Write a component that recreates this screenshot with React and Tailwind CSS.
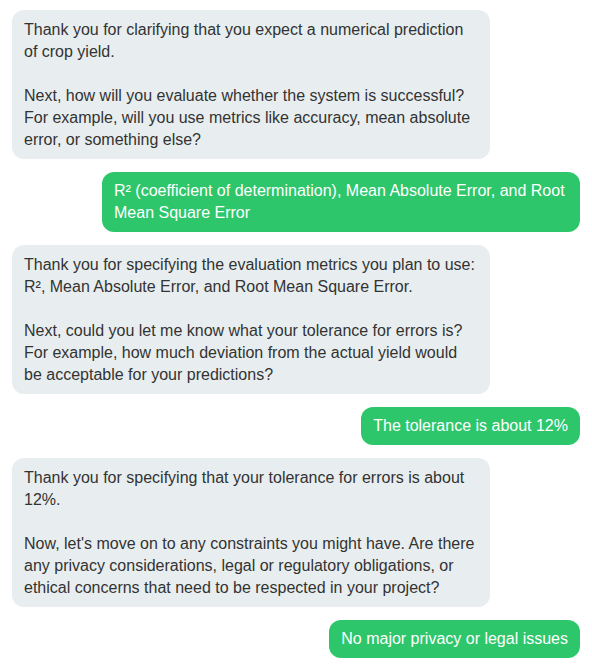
import React from 'react';

const messages = [
    {
        id: 1,
        from: "bot",
        text: "Thank you for clarifying that you expect a numerical prediction of crop yield.\n\nNext, how will you evaluate whether the system is successful? For example, will you use metrics like accuracy, mean absolute error, or something else?",
    },
    {
        id: 2,
        from: "user",
        text: "R² (coefficient of determination), Mean Absolute Error, and Root Mean Square Error",
    },
    {
        id: 3,
        from: "bot",
        text: "Thank you for specifying the evaluation metrics you plan to use: R², Mean Absolute Error, and Root Mean Square Error.\n\nNext, could you let me know what your tolerance for errors is? For example, how much deviation from the actual yield would be acceptable for your predictions?",
    },
    { id: 4, from: "user", text: "The tolerance is about 12%" },
    {
        id: 5,
        from: "bot",
        text: "Thank you for specifying that your tolerance for errors is about 12%.\n\nNow, let's move on to any constraints you might have. Are there any privacy considerations, legal or regulatory obligations, or ethical concerns that need to be respected in your project?",
    },
    { id: 6, from: "user", text: "No major privacy or legal issues" },
];

const App = () => {
    return (
        <div className="w-[592px] min-h-[666px] bg-white px-3 pt-[10px] font-['Liberation_Sans',Arial,sans-serif]">
            <div className="flex flex-col gap-[13px]">
                {messages.map((msg) => (
                    <div key={msg.id} className={msg.from === "user" ? "flex justify-end" : "flex justify-start"}>
                        {msg.from === "user" ? (
                            <div className="max-w-[478px] rounded-xl bg-[#2dc66b] px-3 py-2 text-base leading-[22px] text-white whitespace-pre-line">
                                {msg.text}
                            </div>
                        ) : (
                            <div className="max-w-[478px] rounded-xl bg-[#e8eeef] px-3 pt-[9px] pb-2 text-base leading-[22px] text-[#333333] whitespace-pre-line">
                                {msg.text}
                            </div>
                        )}
                    </div>
                ))}
            </div>
        </div>
    );
};

export default App;
